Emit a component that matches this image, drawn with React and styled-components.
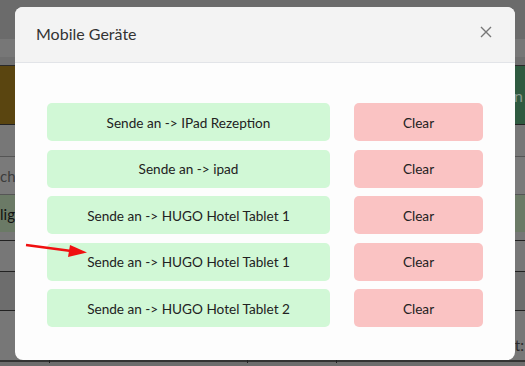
import React from 'react';
import styled, { createGlobalStyle } from 'styled-components';

const devices = [
    'Sende an -> IPad Rezeption',
    'Sende an -> ipad',
    'Sende an -> HUGO Hotel Tablet 1',
    'Sende an -> HUGO Hotel Tablet 1',
    'Sende an -> HUGO Hotel Tablet 2',
];

const GlobalStyle = createGlobalStyle`
    html, body {
        margin: 0;
        padding: 0;
        width: 525px;
        height: 366px;
        overflow: hidden;
        font-family: Lato, "Open Sans", sans-serif;
    }
`;

const Page = () => (
    <Screen>
        <GlobalStyle />
        <Background>
            <Band $bg="#6b6b6b" $h={38} />
            <Band $bg="#777777" $h={17} />
            <Band $bg="#6f6f6f" $h={8} $line="#2a2a2a" />
            <Banner>
                <BrownCell />
                <GreenCell>Aktion</GreenCell>
            </Banner>
            <Band $bg="#777777" $h={31} $line="#555" />
            <TextRow $color="#3c3c3c">chen</TextRow>
            <HighlightRow>
                <Highlight>ligt</Highlight>
            </HighlightRow>
            <Band $bg="#777777" $h={30} $line="#222" />
            <Band $bg="#6d6d6d" $h={38} $line="#222" />
            <FootRow>Gesamt:</FootRow>
            <Ticks>
                <Tick $x={49} />
                <Tick $x={247} />
                <Tick $x={336} />
            </Ticks>
        </Background>

        <Modal>
            <Header>
                <Title>Mobile Geräte</Title>
                <Close aria-label="close">
                    <svg width="12" height="12" viewBox="0 0 12 12">
                        <path d="M1 1L11 11M11 1L1 11" stroke="#777" strokeWidth="1.4" />
                    </svg>
                </Close>
            </Header>
            <Body>
                <Grid>
                    {devices.map((name, i) => (
                        <React.Fragment key={i}>
                            <ActionButton $tone="send">{name}</ActionButton>
                            <ActionButton $tone="clear">Clear</ActionButton>
                        </React.Fragment>
                    ))}
                </Grid>
            </Body>
        </Modal>

        <Arrow width="70" height="20" viewBox="0 0 70 20">
            <line x1="1" y1="3" x2="50" y2="9.5" stroke="#f01010" strokeWidth="2.6" />
            <polygon points="45,3 62,10.5 43,15" fill="#f01010" />
        </Arrow>
    </Screen>
);

const Screen = styled.div`
    position: relative;
    width: 525px;
    height: 366px;
    overflow: hidden;
    background: #6d6d6d;
`;

const Background = styled.div`
    display: flex;
    flex-direction: column;
    height: 100%;
`;

const Band = styled.div`
    height: ${p => p.$h}px;
    background: ${p => p.$bg};
    border-bottom: 1px solid ${p => p.$line || 'transparent'};
    flex-shrink: 0;
`;

const Banner = styled.div`
    display: flex;
    height: 58px;
    border-bottom: 1px solid #222;
`;

const BrownCell = styled.div`
    flex: 1;
    background: #5a4510;
`;

const GreenCell = styled.div`
    width: 260px;
    background: #2f5a40;
    color: #8a9a90;
    font-size: 16px;
    display: flex;
    align-items: center;
    justify-content: flex-end;
    padding-right: 2px;
`;

const TextRow = styled.div`
    height: 37px;
    background: #7a7a7a;
    color: ${p => p.$color};
    border-bottom: 1px solid #555;
    font-size: 15px;
    display: flex;
    align-items: center;
    padding-left: 0;
    flex-shrink: 0;
`;

const HighlightRow = styled.div`
    height: 45px;
    background: #777777;
    border-bottom: 1px solid #222;
    flex-shrink: 0;
`;

const Highlight = styled.div`
    height: 37px;
    background: #6b7a66;
    color: #111;
    font-size: 15px;
    display: flex;
    align-items: center;
`;

const FootRow = styled.div`
    flex: 1;
    background: #777777;
    border-bottom: 2px solid #333;
    color: #2a2a2a;
    font-size: 15px;
    display: flex;
    align-items: flex-end;
    justify-content: flex-end;
    padding: 0 1px 6px 0;
`;

const Ticks = styled.div`
    position: relative;
    height: 4px;
    background: #6d6d6d;
`;

const Tick = styled.span`
    position: absolute;
    left: ${p => p.$x}px;
    top: -3px;
    width: 1px;
    height: 4px;
    background: #222;
`;

const Modal = styled.div`
    position: absolute;
    left: 15px;
    top: 7px;
    width: 500px;
    height: 353px;
    background: #fdfdfd;
    border-radius: 8px;
    overflow: hidden;
    display: flex;
    flex-direction: column;
`;

const Header = styled.div`
    height: 55px;
    background: #f3f3f3;
    border-bottom: 1px solid #e2e4e8;
    display: flex;
    align-items: center;
    justify-content: space-between;
    padding: 0 23px 0 21px;
`;

const Title = styled.h5`
    margin: 0;
    font-size: 16px;
    font-weight: 400;
    color: #333;
    margin-top: -2px;
`;

const Close = styled.button`
    border: 0;
    background: none;
    padding: 0;
    width: 12px;
    height: 12px;
    display: flex;
    margin-top: -6px;
`;

const Body = styled.div`
    padding: 40px 32px 0;
`;

const Grid = styled.div`
    display: grid;
    grid-template-columns: 283px 129px;
    column-gap: 24px;
    row-gap: 8.5px;
`;

const ActionButton = styled.button`
    height: 38px;
    border: 0;
    border-radius: 5px;
    background: ${p => (p.$tone === 'clear' ? '#fac3c3' : '#d1f8d6')};
    color: #222;
    font-family: Lato, "Open Sans", sans-serif;
    font-size: 13.6px;
    padding: 0;
    padding-top: 1px;
`;

const Arrow = styled.svg`
    position: absolute;
    left: 25px;
    top: 242px;
`;

export default Page;
